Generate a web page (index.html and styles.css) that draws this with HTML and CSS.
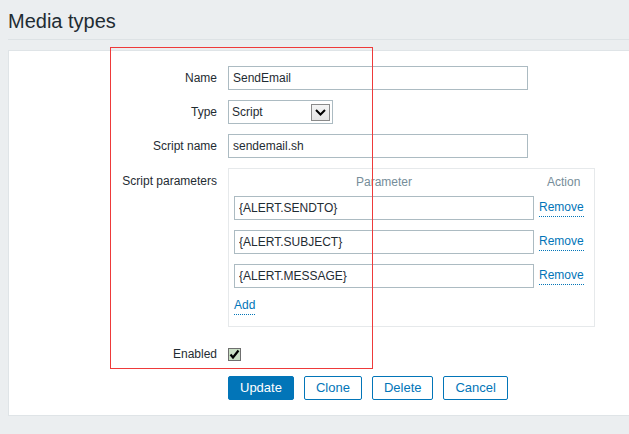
FILE: index.html
```html
<!DOCTYPE html>
<html>
<head>
<meta charset="utf-8">
<title>Media types</title>
<link rel="stylesheet" href="styles.css">
</head>
<body>
<div class="header"><h1 class="title">Media types</h1></div>
<div class="panel">
  <div class="form-row">
    <label class="lbl">Name</label>
    <input class="txt w300" type="text" value="SendEmail">
  </div>
  <div class="form-row">
    <label class="lbl">Type</label>
    <div class="select">
      <span class="select-text">Script</span>
      <span class="select-btn"><svg width="11" height="7" viewBox="0 0 11 7"><path d="M1 1 L5.5 5.5 L10 1" fill="none" stroke="#000" stroke-width="2"/></svg></span>
    </div>
  </div>
  <div class="form-row">
    <label class="lbl">Script name</label>
    <input class="txt w300" type="text" value="sendemail.sh">
  </div>
  <div class="form-row top">
    <label class="lbl lbl-top">Script parameters</label>
    <div class="params">
      <div class="params-head">
        <div class="ph-param">Parameter</div>
        <div class="ph-action">Action</div>
      </div>
      <div class="param-row">
        <input class="txt w300" type="text" value="{ALERT.SENDTO}">
        <a class="link remove">Remove</a>
      </div>
      <div class="param-row">
        <input class="txt w300" type="text" value="{ALERT.SUBJECT}">
        <a class="link remove">Remove</a>
      </div>
      <div class="param-row">
        <input class="txt w300" type="text" value="{ALERT.MESSAGE}">
        <a class="link remove">Remove</a>
      </div>
      <div class="add-row"><a class="link">Add</a></div>
    </div>
  </div>
  <div class="form-row enabled-row">
    <label class="lbl">Enabled</label>
    <span class="checkbox"><svg width="11" height="11" viewBox="0 0 11 11"><path d="M1.5 5.5 L4 8.5 L9.5 1.5" fill="none" stroke="#000" stroke-width="2.2"/></svg></span>
  </div>
  <div class="buttons">
    <button class="btn primary">Update</button>
    <button class="btn">Clone</button>
    <button class="btn">Delete</button>
    <button class="btn">Cancel</button>
  </div>
  <div class="annotation"></div>
</div>
</body>
</html>
```

FILE: styles.css
```css
html, body {
  margin: 0;
  padding: 0;
}
body {
  background: #ebeef0;
  font-family: "Liberation Sans", Arial, sans-serif;
  font-size: 12px;
  color: #1f2c33;
  overflow: hidden;
}
.header {
  margin-left: 8px;
  height: 39px;
  border-bottom: 1px solid #dde2e5;
}
.title {
  margin: 0;
  padding-top: 9px;
  font-size: 20px;
  line-height: 24px;
  font-weight: normal;
  color: #1f2c33;
}
.panel {
  position: relative;
  margin: 10px 0 0 8px;
  background: #fff;
  border: 1px solid #dfe4e7;
  border-right: none;
  padding: 15px 0 15px 0;
}
.form-row {
  display: flex;
  align-items: center;
  margin-bottom: 10px;
}
.form-row.top {
  align-items: flex-start;
}
.lbl {
  width: 208px;
  margin-right: 11px;
  text-align: right;
  line-height: 24px;
}
.lbl-top {
  padding-top: 2px;
  line-height: 22px;
}
.txt {
  box-sizing: border-box;
  height: 24px;
  border: 1px solid #acbbc2;
  padding: 0 4px;
  font-family: "Liberation Sans", Arial, sans-serif;
  font-size: 12px;
  color: #1f2c33;
  background: #fff;
  margin: 0;
  outline: none;
}
.w300 {
  width: 300px;
}
.select {
  box-sizing: border-box;
  width: 105px;
  height: 24px;
  border: 1px solid #acbbc2;
  display: flex;
  align-items: center;
  justify-content: space-between;
  padding: 0 2px 0 3px;
}
.select-text {
  line-height: 22px;
}
.select-btn {
  box-sizing: border-box;
  width: 19px;
  height: 17px;
  border: 1px solid #8a8a8a;
  background: linear-gradient(#f4f4f4, #e4e4e4);
  display: flex;
  align-items: center;
  justify-content: center;
}
.params {
  box-sizing: border-box;
  width: 367px;
  border: 1px solid #e6e9eb;
  padding: 6px 9px 10px 5px;
}
.params-head {
  display: flex;
  line-height: 14px;
  height: 14px;
  margin-bottom: 7px;
  color: #768d99;
}
.ph-param {
  width: 300px;
  text-align: center;
}
.ph-action {
  margin-left: 13px;
}
.param-row {
  display: flex;
  align-items: flex-start;
  margin-bottom: 10px;
}
.link {
  display: inline-block;
  color: #0275b8;
  line-height: 14px;
  padding-bottom: 2px;
  border-bottom: 1px dotted #0275b8;
  cursor: pointer;
}
.remove {
  margin-left: 5px;
  margin-top: 4px;
}
.add-row {
  height: 18px;
}
.enabled-row {
  margin-top: 15px;
}
.checkbox {
  box-sizing: border-box;
  width: 13px;
  height: 13px;
  border: 1px solid #6f6f6f;
  background: #c9dfc4;
  display: flex;
  align-items: center;
  justify-content: center;
}
.buttons {
  display: flex;
  gap: 10px;
  margin-left: 219px;
}
.btn {
  box-sizing: border-box;
  height: 24px;
  padding: 0 11px;
  border: 1px solid #0275b8;
  border-radius: 2px;
  background: #fff;
  color: #0275b8;
  font-family: "Liberation Sans", Arial, sans-serif;
  font-size: 13px;
  line-height: 22px;
  margin: 0;
}
.btn.primary {
  background: #0275b8;
  color: #fff;
}
.annotation {
  position: absolute;
  left: 101px;
  top: -4px;
  width: 261px;
  height: 320px;
  border: 1px solid #ee3a3a;
  pointer-events: none;
}
```
